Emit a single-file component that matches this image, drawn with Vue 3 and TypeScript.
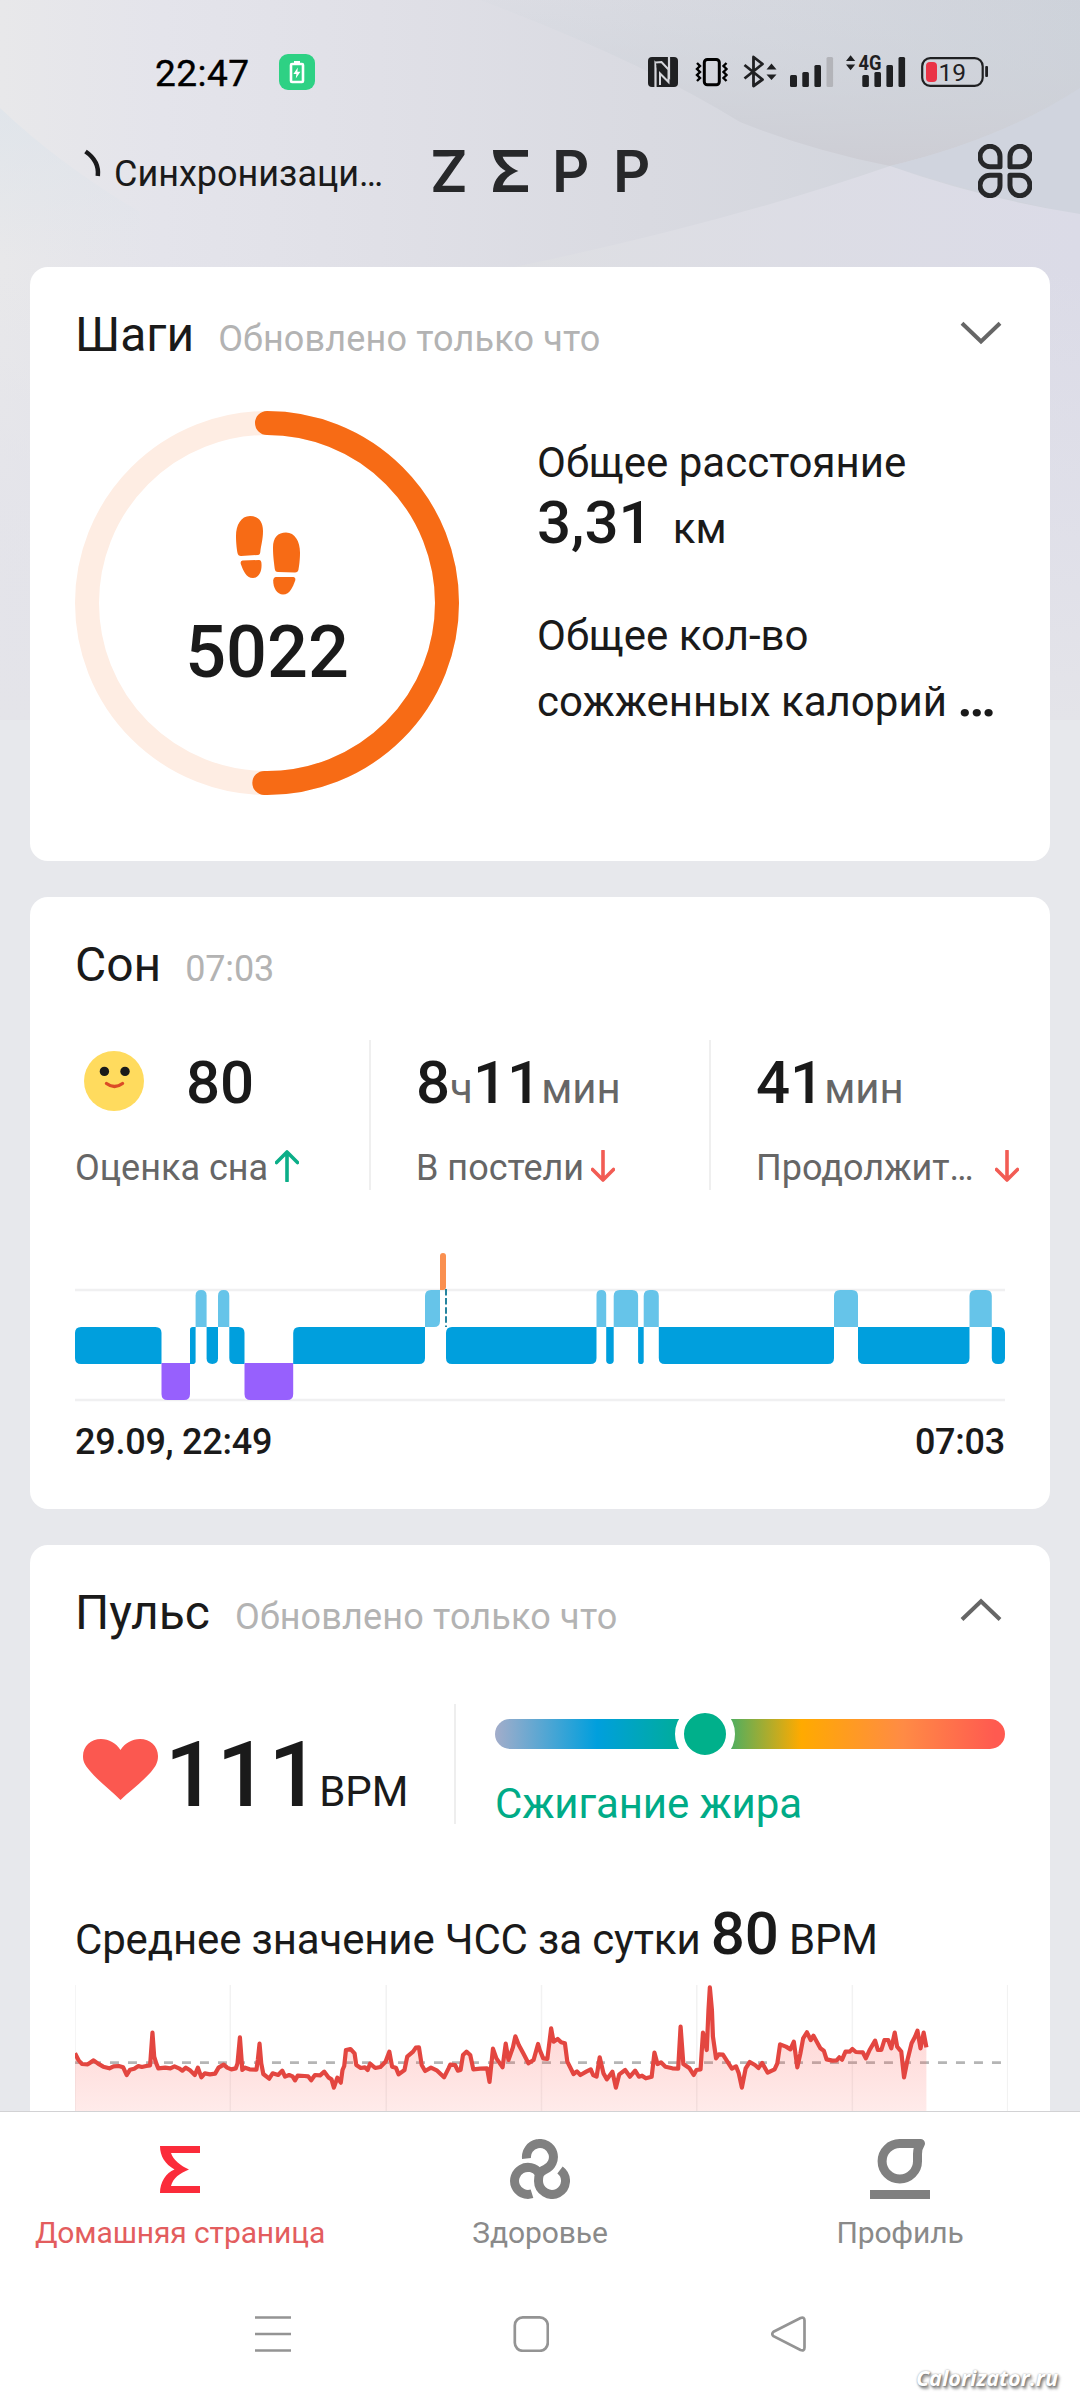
<script setup lang="ts">
type Stage = 'awake' | 'rem' | 'light' | 'deep'

interface Segment {
  stage: Stage
  from: number
  to: number
}

const rowTop: Record<Stage, number> = { awake: 3, rem: 40, light: 77, deep: 113 }
const rowOrder: Stage[] = ['awake', 'rem', 'light', 'deep']

const segments: Segment[] = [
  { stage: 'light', from: 0, to: 86.5 },
  { stage: 'deep', from: 86.5, to: 115 },
  { stage: 'light', from: 115, to: 120.6 },
  { stage: 'rem', from: 120.6, to: 131.6 },
  { stage: 'light', from: 131.6, to: 143 },
  { stage: 'rem', from: 143, to: 154.3 },
  { stage: 'light', from: 154.3, to: 169.5 },
  { stage: 'deep', from: 169.5, to: 218.2 },
  { stage: 'light', from: 218.2, to: 350 },
  { stage: 'rem', from: 350, to: 365 },
  { stage: 'awake', from: 365, to: 371 },
  { stage: 'light', from: 371, to: 521.5 },
  { stage: 'rem', from: 521.5, to: 531.2 },
  { stage: 'light', from: 531.2, to: 538.7 },
  { stage: 'rem', from: 538.7, to: 563.1 },
  { stage: 'light', from: 563.1, to: 568.7 },
  { stage: 'rem', from: 568.7, to: 583.8 },
  { stage: 'light', from: 583.8, to: 759 },
  { stage: 'rem', from: 759, to: 783 },
  { stage: 'light', from: 783, to: 894.5 },
  { stage: 'rem', from: 894.5, to: 916.8 },
  { stage: 'light', from: 916.8, to: 930 },
]

// A corner stays square where the neighbouring stage touches it.
function segmentPath(s: Segment, i: number): string {
  const level = rowOrder.indexOf(s.stage)
  const prev = segments[i - 1] ? rowOrder.indexOf(segments[i - 1].stage) : -9
  const next = segments[i + 1] ? rowOrder.indexOf(segments[i + 1].stage) : -9
  const r = Math.min(6, (s.to - s.from) / 2)
  const tl = prev === level - 1 ? 0 : r
  const tr = next === level - 1 ? 0 : r
  const bl = prev === level + 1 ? 0 : r
  const br = next === level + 1 ? 0 : r
  const y = rowTop[s.stage]
  const b = s.stage === 'deep' ? 150 : y + 37
  return (
    `M${s.from + tl} ${y}H${s.to - tr}Q${s.to} ${y} ${s.to} ${y + tr}V${b - br}` +
    `Q${s.to} ${b} ${s.to - br} ${b}H${s.from + bl}Q${s.from} ${b} ${s.from} ${b - bl}` +
    `V${y + tl}Q${s.from} ${y} ${s.from + tl} ${y}Z`
  )
}

const pulse =
  '218,280 228,300 238,312 255,313 262,308 272,301 285,311 300,320 318,325 330,319 345,318 358,322 368,345 378,329 390,326 402,318 412,321 425,318 436,316 438,290 443,218 448,290 454,310 460,325 480,323 495,325 507,319 520,325 530,332 540,323 552,331 566,345 575,323 585,352 595,340 610,343 625,341 635,323 650,314 660,323 672,328 685,325 690,310 697,232 704,330 712,323 725,328 745,329 749,300 754,251 759,310 765,342 782,356 792,340 808,345 820,332 828,350 840,345 850,349 857,361 865,347 885,348 895,349 904,361 915,345 930,346 942,335 955,353 963,358 970,383 980,353 990,368 995,330 1000,318 1005,270 1018,267 1030,280 1035,315 1048,324 1060,322 1068,330 1075,311 1090,324 1105,321 1120,305 1131,275 1139,320 1150,323 1158,343 1175,330 1183,290 1200,275 1208,263 1217,262 1225,315 1235,333 1252,323 1270,332 1290,352 1303,325 1308,314 1322,315 1330,332 1338,330 1345,285 1355,275 1366,285 1375,328 1395,326 1415,325 1422,366 1432,266 1442,295 1460,322 1469,251 1477,300 1490,262 1497,229 1507,255 1520,280 1535,310 1550,300 1563,252 ' +
  '1568,270 1578,295 1590,297 1601,205 1608,245 1620,237 1630,247 1641,250 1648,305 1666,342 1676,334 1686,345 1703,335 1716,328 1723,345 1733,350 1742,292 1753,340 1763,358 1779,335 1789,383 1799,343 1816,330 1830,350 1845,332 1856,350 1865,347 1876,355 1893,350 1901,278 1910,312 1920,307 1933,320 1953,325 1970,326 1977,200 1985,312 2003,325 2015,345 2023,330 2035,328 2042,218 2053,270 2058,150 2062,82 2068,150 2071,230 2080,295 2088,283 2100,284 2113,305 2126,326 2138,319 2146,340 2155,383 2166,325 2178,306 2193,315 2203,324 2214,309 2230,338 2250,328 2258,310 2266,253 2283,260 2296,268 2306,245 2316,322 2325,280 2333,235 2344,217 2355,240 2363,227 2383,265 2393,272 2401,298 2418,302 2430,301 2438,292 2446,299 2456,275 2468,275 2476,267 2486,276 2506,277 2515,295 2526,270 2542,242 2550,270 2560,270 2569,240 2580,240 2589,265 2599,218 2606,260 2618,275 2626,352 2636,300 2648,250 2658,230 2665,212 2674,265 2683,218 2691,262'

const gridLines = [218, 669, 1122, 1573, 2024, 2476, 2927]
const ringLength = 2 * Math.PI * 180
const ringShare = 5022 / 10000
</script>

<template>
  <div class="screen">
    <svg class="backdrop" viewBox="0 0 1080 720" aria-hidden="true">
      <defs>
        <linearGradient id="base" x1="0" x2="1" y1="0" y2="0">
          <stop offset="0" stop-color="#e8e8ea" />
          <stop offset="0.15" stop-color="#e4e4eb" />
          <stop offset="0.35" stop-color="#e0e0e7" />
          <stop offset="0.6" stop-color="#d9dae1" />
          <stop offset="1" stop-color="#ced2da" />
        </linearGradient>
        <linearGradient id="shade" x1="0" x2="0" y1="0" y2="1">
          <stop offset="0" stop-color="#cfd6dd" stop-opacity="0.1" />
          <stop offset="1" stop-color="#cdcdd4" />
        </linearGradient>
        <linearGradient id="patch" x1="0" x2="0" y1="0" y2="1">
          <stop offset="0" stop-color="#dbe3eb" stop-opacity="0.6" />
          <stop offset="1" stop-color="#dbe3eb" stop-opacity="0" />
        </linearGradient>
        <linearGradient id="floor" x1="0" x2="1" y1="0" y2="0">
          <stop offset="0" stop-color="#dedfe3" />
          <stop offset="1" stop-color="#dbdbe7" />
        </linearGradient>
        <linearGradient id="fade" x1="0" x2="0" y1="0" y2="1">
          <stop offset="0" stop-color="#e3e3ea" stop-opacity="0" />
          <stop offset="0.5" stop-color="#e2e2ea" stop-opacity="0.6" />
          <stop offset="1" stop-color="#e4e4e9" />
        </linearGradient>
      </defs>
      <rect width="1080" height="720" fill="url(#base)" />
      <path d="M0 108Q60 165 140 212V260H0Z" fill="url(#patch)" />
      <path d="M480 0Q640 60 740 122Q810 150 890 166Q1000 140 1080 88V0H480Z" fill="url(#shade)" />
      <path d="M890 166Q1000 140 1080 88V215Q980 195 890 166Z" fill="#d0d4de" />
      <path d="M500 270Q720 225 890 166Q980 198 1080 214V720H500Z" fill="url(#floor)" />
      <rect y="270" width="1080" height="450" fill="url(#fade)" />
    </svg>

    <div class="status">
      <span class="clock">22:47</span>
      <svg class="saver" width="36" height="36" viewBox="0 0 36 36">
        <rect width="36" height="36" rx="9" fill="#2ed184" />
        <rect x="12" y="10" width="12" height="18" rx="1" fill="none" stroke="#fff" stroke-width="2.6" />
        <rect x="15" y="7" width="6" height="3" fill="#fff" />
        <path d="M18.8 13.5L14.4 20H17.4L16.8 24.5L21.4 17.8H18.4Z" fill="#fff" />
      </svg>
      <svg class="indicators" width="344" height="56" viewBox="646 44 344 56">
        <rect x="648" y="57" width="30" height="30" rx="4" fill="#1f2022" />
        <path d="M655.5 87V63L669 77V57" fill="none" stroke="#d5d6db" stroke-width="2.2" />
        <path d="M655.8 62.5L661.5 62L668.5 69.5V82L660 73.5V85" fill="#1f2022" stroke="#d5d6db" stroke-width="2" />
        <rect x="704.3" y="59.4" width="15" height="25.4" rx="3" fill="none" stroke="#000" stroke-width="3" />
        <path d="M697 63l3 3l-3 3l3 3l-3 3l3 3l-3 3M726.5 63l-3 3l3 3l-3 3l3 3l-3 3l3 3" fill="none" stroke="#000" stroke-width="2.4" />
        <path d="M744.5 65L762.5 79.5L753.5 86V57L762.5 64L744.5 78.5" fill="none" stroke="#1f2022" stroke-width="2.8" stroke-linejoin="round" />
        <path d="M766.5 69.5L771.5 63.5L776.5 69.5ZM766.5 74.5L771.5 80L776.5 74.5Z" fill="#1f2022" />
        <g fill="#1f2022">
          <rect x="790" y="75" width="7" height="12" rx="1.5" />
          <rect x="802.3" y="72" width="6.6" height="15" rx="1.5" />
          <rect x="814.4" y="65" width="6.6" height="22" rx="1.5" />
          <rect x="826.5" y="57" width="6.6" height="30" rx="1.5" fill="#b3b4b9" />
          <rect x="862.3" y="75" width="6.6" height="12" rx="1.5" />
          <rect x="874.4" y="72" width="6.6" height="15" rx="1.5" />
          <rect x="886.4" y="65" width="6.6" height="22" rx="1.5" />
          <rect x="898.5" y="57" width="6.6" height="30" rx="1.5" />
          <path d="M846 61L850.6 55.2L855.2 61ZM846 64.5L850.6 70.2L855.2 64.5Z" />
          <text x="858.5" y="70.3" font-size="20.5" font-weight="700" textLength="23" lengthAdjust="spacingAndGlyphs">4G</text>
          <rect x="985.2" y="66" width="2.8" height="11" rx="1" />
          <text x="938.5" y="81.2" font-size="24.5">19</text>
        </g>
        <rect x="922.2" y="58.2" width="60.5" height="27.6" rx="8" fill="none" stroke="#1f2022" stroke-width="2.2" />
        <rect x="926" y="62" width="11" height="20" rx="4" fill="#ea3447" />
      </svg>
    </div>

    <header class="topbar">
      <div class="sync">
        <svg width="38" height="60" viewBox="0 0 38 60">
          <path d="M11.5 10.5Q25.500 20 23.800 35" fill="none" stroke="#1a1a1c" stroke-width="4.500" />
        </svg>
        <span>Синхронизаци…</span>
      </div>
      <div class="logo">
        <span>Z</span>
        <svg width="35" height="42" viewBox="0 0 40 47" preserveAspectRatio="none">
          <path d="M0 0H40V7.6H11C13 14 21 20 29 23.5C20 27 13 32 11 39.4H40V47H0C0 36 6 27 14.5 23.5C5 18 0 10 0 0Z" />
        </svg>
        <span>P</span>
        <span>P</span>
      </div>
      <svg class="apps" width="54" height="54" viewBox="0 0 54 54">
        <g fill="none" stroke="#27282a" stroke-width="5">
          <path d="M22 22.7H12.4A10 10.2 0 1 1 22 12.6Z" stroke-linejoin="round" />
          <path d="M32 22.7H41.6A10 10.2 0 1 0 32 12.6Z" stroke-linejoin="round" />
          <path d="M22 31.3H12.4A10 10.2 0 1 0 22 41.4Z" stroke-linejoin="round" />
          <path d="M32 31.3H41.6A10 10.2 0 1 1 32 41.4Z" stroke-linejoin="round" />
        </g>
      </svg>
    </header>

    <main class="cards">
      <section class="card steps">
        <div class="card-head">
          <h2>Шаги</h2>
          <span class="note">Обновлено только что</span>
          <svg class="chevron" width="44" height="26" viewBox="0 0 44 26">
            <path d="M3 3.2L22 21.5L41 3.2" />
          </svg>
        </div>
        <div class="steps-body">
          <div class="ring">
            <svg class="ring-art" viewBox="0 0 384 384">
              <circle cx="192" cy="192" r="180" fill="none" stroke="#feede3" stroke-width="24" />
              <circle
                cx="192" cy="192" r="180" fill="none" stroke="#f76b15" stroke-width="24"
                stroke-linecap="round" transform="rotate(-90 192 192)"
                :stroke-dasharray="`${ringLength * ringShare} ${ringLength}`"
              />
            </svg>
            <svg class="feet" width="64" height="79" viewBox="0 0 64 79">
              <path d="M14 0C5 0 0 9 0 20C0 28 1 34 1.500 37Q2 40 5 40L22 39Q24 39 24.300 36C25 29 27 24 27 15C27 5 22 0 14 0Z" />
              <path d="M6.500 44.500L23 44Q25.500 44 25.500 48C26 55 23 62 17 62C10 62 7 54 4.800 48Q4 45 6.500 44.500Z" />
              <g transform="translate(64 16.500) scale(-1 1)">
                <path d="M14 0C5 0 0 9 0 20C0 28 1 34 1.500 37Q2 40 5 40L22 39.500Q25 39.500 25.300 36C26 29 27 24 27 15C27 5 22 0 14 0Z" />
                <path d="M6.500 44.500L24 44.500Q26.500 44.500 26.800 48C27 55 23 62 17 62C10 62 7 54 4.800 48Q4 45 6.500 44.500Z" />
              </g>
            </svg>
            <strong>5022</strong>
          </div>
          <div class="steps-info">
            <p>Общее расстояние</p>
            <p class="distance"><b>3,31</b><span>км</span></p>
            <p class="burned">Общее кол-во<br />сожженных калорий <b>…</b></p>
          </div>
        </div>
      </section>

      <section class="card sleep">
        <div class="card-head">
          <h2>Сон</h2>
          <span class="note">07:03</span>
        </div>
        <div class="metrics">
          <div class="metric">
            <div class="value">
              <svg class="smile" width="60" height="60" viewBox="0 0 60 60">
                <circle cx="30" cy="30" r="30" fill="#ffdb5e" />
                <circle cx="20.400" cy="20.400" r="4.700" fill="#1a1a1a" />
                <circle cx="41" cy="20.400" r="4.700" fill="#1a1a1a" />
                <path d="M22.500 32.500Q30.500 38.500 38.500 32.500" fill="none" stroke="#db4b26" stroke-width="3.400" stroke-linecap="round" />
              </svg>
              <b>80</b>
            </div>
            <div class="label">
              <span>Оценка сна</span>
              <svg class="arrow up" width="24" height="32" viewBox="0 0 24 32"><path d="M12 31V2M1.500 12.500L12 2L22.500 12.500" /></svg>
            </div>
          </div>
          <div class="metric">
            <div class="value"><b>8</b><i>ч</i><b>11</b><i>мин</i></div>
            <div class="label">
              <span>В постели</span>
              <svg class="arrow" width="24" height="32" viewBox="0 0 24 32"><path d="M12 1V30M1.500 19.500L12 30L22.500 19.500" /></svg>
            </div>
          </div>
          <div class="metric">
            <div class="value"><b>41</b><i>мин</i></div>
            <div class="label spread">
              <span>Продолжит…</span>
              <svg class="arrow" width="24" height="32" viewBox="0 0 24 32"><path d="M12 1V30M1.500 19.500L12 30L22.500 19.500" /></svg>
            </div>
          </div>
        </div>
        <svg class="hypnogram" width="930" height="153" viewBox="0 0 930 153">
          <path d="M0 40H930M0 150H930" stroke="#f0f0f1" stroke-width="2.400" />
          <path v-for="(s, i) in segments" :key="i" :class="s.stage" :d="segmentPath(s, i)" />
          <path d="M371 39V77" stroke="#25849f" stroke-width="2" stroke-dasharray="6.500 2.600" />
        </svg>
        <div class="range"><span>29.09, 22:49</span><span>07:03</span></div>
      </section>

      <section class="card heart">
        <div class="card-head">
          <h2>Пульс</h2>
          <span class="note">Обновлено только что</span>
          <svg class="chevron" width="44" height="26" viewBox="0 0 44 26">
            <path d="M3 21.500L22 3.200L41 21.500" />
          </svg>
        </div>
        <div class="pulse-row">
          <div class="pulse-now">
            <svg width="75" height="61" viewBox="0 0 75 61">
              <path d="M37.500 61C28 51 15 42 7 32C1 25 0 22 0 17C0 7 8 0 18 0C26 0 33 4 37.500 11C42 4 49 0 57 0C67 0 75 7 75 17C75 23 73 27 68 33C59 43 47 52 37.500 61Z" fill="#fb5850" />
            </svg>
            <b>111</b><span>BPM</span>
          </div>
          <div class="zone">
            <div class="scale"><i></i></div>
            <span>Сжигание жира</span>
          </div>
        </div>
        <p class="average">Среднее значение ЧСС за сутки <b>80</b> BPM</p>
        <svg class="pulse-chart" width="933" height="126" viewBox="218 75 2710 378" preserveAspectRatio="none">
          <defs>
            <linearGradient id="area" gradientUnits="userSpaceOnUse" x1="0" y1="75" x2="0" y2="453">
              <stop offset="0" stop-color="#ff5a55" stop-opacity="0.3" />
              <stop offset="1" stop-color="#fb5850" stop-opacity="0.12" />
            </linearGradient>
          </defs>
          <line v-for="x in gridLines" :key="x" class="grid" :x1="x" :x2="x" y1="75" y2="453" />
          <line class="mean" x1="215" x2="2928" y1="308" y2="308" />
          <polygon :points="`218,453 ${pulse} 2691,453`" fill="url(#area)" />
          <polyline class="trace" :points="pulse" />
        </svg>
      </section>
    </main>

    <nav class="tabs">
      <a class="tab active">
        <span class="tab-icon">
          <svg width="40" height="47" viewBox="0 0 40 47">
            <path d="M0 0H40V7H11C13 14 21 20 29 23.500C20 27 13 32 11 40H40V47H0C0 36 6 27 14.500 23.500C5 18 0 10 0 0Z" fill="#fb2b3a" />
          </svg>
        </span>
        Домашняя страница
      </a>
      <a class="tab">
        <span class="tab-icon">
          <svg width="60" height="60" viewBox="0 0 60 60" fill="none" stroke="#808080" stroke-width="9">
            <path d="M16.500 19.500A13.500 13.500 0 1 1 35 30.500C29 33 28.500 37 28.500 42A13.500 13.500 0 1 0 50 31" />
            <path d="M22 54.800A13.500 13.500 0 1 1 29 34" />
          </svg>
        </span>
        Здоровье
      </a>
      <a class="tab">
        <span class="tab-icon">
          <svg width="60" height="60" viewBox="0 0 60 60">
            <path d="M30 4.500H50.500Q47.500 9 47.500 15V22A17.700 17.700 0 1 1 30 4.500Z" fill="none" stroke="#808080" stroke-width="9" stroke-linejoin="round" />
            <rect y="51" width="60" height="9" fill="#808080" />
          </svg>
        </span>
        Профиль
      </a>
    </nav>

    <div class="system">
      <svg width="36" height="36" viewBox="0 0 36 36"><path d="M0 1.500H36M0 18H36M0 34.500H36" /></svg>
      <svg width="36" height="36" viewBox="0 0 36 36"><rect x="1.800" y="1.400" width="33" height="33.400" rx="8" /></svg>
      <svg width="36" height="36" viewBox="0 0 36 36"><path d="M2.500 15.800L29.500 2Q33.500 .6 33.500 4.600V31.400Q33.500 35.400 29.500 34L2.500 20.200Q0 18 2.500 15.800Z" /></svg>
    </div>
    <div class="watermark">Calorizator.ru</div>
  </div>
</template>

<style>
body {
  margin: 0;
  background: #e7e8ec;
}
</style>

<style scoped>
.screen {
  position: relative;
  display: flex;
  flex-direction: column;
  width: 1080px;
  height: 2400px;
  overflow: hidden;
  background: #e7e8ec;
  color: #1a1a1a;
  font-family: Roboto, "Noto Sans", sans-serif;
}
.screen svg {
  display: block;
  flex: none;
}
.backdrop {
  position: absolute;
  top: 0;
  left: 0;
  width: 1080px;
  height: 720px;
}
.status {
  position: relative;
  box-sizing: border-box;
  display: flex;
  align-items: center;
  height: 110px;
  padding: 34px 90px 0 155px;
}
.clock {
  width: 124px;
  margin-top: 2px;
  font-size: 37px;
  letter-spacing: 0.5px;
  color: #000;
  -webkit-text-stroke: 0.4px #000;
}
.indicators {
  margin-left: auto;
}
.topbar {
  position: relative;
  display: grid;
  grid-template-columns: 1fr auto 1fr;
  align-items: center;
  height: 122px;
  padding: 0 48px 0 74px;
}
.sync {
  display: flex;
  align-items: center;
  gap: 2px;
  font-size: 36px;
  white-space: nowrap;
}
.sync span {
  margin-top: 5px;
}
.logo {
  display: flex;
  align-items: center;
  gap: 26px;
  margin-right: 28px;
  color: #27282a;
  font: 600 58px/60px Inter, Roboto, sans-serif;
}
.logo span {
  width: 35px;
}
.logo svg {
  margin: 0 -2px 0 2px;
}
.logo path {
  fill: #27282a;
}
.apps {
  justify-self: end;
}
.cards {
  position: relative;
  box-sizing: border-box;
  display: flex;
  flex-direction: column;
  gap: 36px;
  height: 1879px;
  padding: 35px 30px 0;
  overflow: hidden;
}
.card {
  box-sizing: border-box;
  flex: none;
  padding: 38px 45px 0;
  border-radius: 18px;
  background: #fff;
}
.steps {
  height: 594px;
}
.sleep {
  height: 612px;
}
.heart {
  height: 700px;
}
.card-head {
  display: flex;
  align-items: baseline;
  height: 60px;
  line-height: 60px;
}
h2 {
  margin: 0;
  font-size: 48px;
  font-weight: 400;
}
.note {
  margin-left: 24px;
  font-size: 36px;
  letter-spacing: 0.18px;
  color: #b3b3b3;
}
.sleep .note {
  letter-spacing: -0.2px;
}
.heart .note {
  margin-left: 25px;
}
.chevron {
  align-self: center;
  margin: -4px 2px 0 auto;
}
.chevron path {
  fill: none;
  stroke: #666;
  stroke-width: 4;
}
.steps-body {
  display: flex;
  gap: 78px;
  margin-top: 46px;
}
.ring {
  position: relative;
  display: flex;
  flex-direction: column;
  align-items: center;
  width: 384px;
  height: 384px;
}
.ring-art {
  position: absolute;
  inset: 0;
}
.feet {
  margin: 105px 0 0 2px;
  fill: #f76b15;
}
.ring strong {
  margin-top: 16px;
  font-size: 72px;
  font-weight: 500;
  line-height: 84px;
}
.steps-info {
  padding-top: 19px;
  font-size: 42px;
  line-height: 66px;
  white-space: nowrap;
}
p {
  margin: 0;
}
b {
  font-weight: 500;
}
.distance {
  display: flex;
  align-items: baseline;
  gap: 20px;
  height: 66px;
  margin: -6px 0 0;
}
.distance b {
  font-size: 60px;
}
.burned {
  margin-top: 47px;
}
.burned b {
  font-size: 52px;
  font-weight: 700;
  line-height: 0;
}
.metrics {
  display: flex;
  height: 150px;
  margin-top: 45px;
}
.metric {
  box-sizing: border-box;
  flex: none;
  width: 340px;
  padding: 13px 0 0 45px;
  border-left: 2px solid #efefef;
}
.metric:first-child {
  width: 294px;
  padding-left: 0;
  border-left: 0;
}
.metric:last-child {
  width: 296px;
}
.value {
  display: flex;
  align-items: baseline;
  height: 60px;
  line-height: 60px;
  white-space: nowrap;
}
.value b {
  font-size: 60px;
}
.value i {
  font-size: 42px;
  font-style: normal;
  color: #666;
}
.smile {
  align-self: center;
  margin: -4px 42px 0 9px;
}
.label {
  display: flex;
  align-items: center;
  height: 44px;
  margin-top: 33px;
  font-size: 36px;
  line-height: 44px;
  color: #666;
  white-space: nowrap;
}
.arrow {
  margin: -4px 0 0 7px;
}
.spread .arrow {
  margin-left: 21px;
}
.arrow path {
  fill: none;
  stroke: #f25c54;
  stroke-width: 3.6;
  stroke-linecap: round;
  stroke-linejoin: round;
}
.arrow.up path {
  stroke: #0bae88;
}
.hypnogram {
  margin-top: 60px;
}
.awake {
  fill: #fa9050;
}
.rem {
  fill: #66c4e9;
}
.light {
  fill: #009fdd;
}
.deep {
  fill: #9760fd;
}
.range {
  display: flex;
  justify-content: space-between;
  margin-top: 17px;
  font-size: 36px;
  font-weight: 500;
  letter-spacing: -0.25px;
  line-height: 44px;
}
.pulse-row {
  display: flex;
  height: 120px;
  margin-top: 61px;
}
.pulse-now {
  box-sizing: border-box;
  display: flex;
  align-items: baseline;
  width: 381px;
  height: 120px;
  padding-left: 8px;
  border-right: 2px solid #eee;
  font-size: 42px;
  line-height: 100px;
  white-space: nowrap;
}
.pulse-now svg {
  align-self: flex-start;
  margin: 35px 7px 0 0;
}
.pulse-now b {
  margin: 21px 0 0;
  font-size: 91px;
}
.pulse-now span {
  margin-left: -1px;
}
.zone {
  flex: 1;
  padding: 15px 0 0 39px;
  font-size: 42px;
  letter-spacing: -0.1px;
  line-height: 60px;
  color: #00ab87;
}
.zone span {
  display: block;
  margin-top: 25px;
}
.scale {
  position: relative;
  height: 30px;
  border-radius: 15px;
  background: linear-gradient(90deg, #a3adca 0, #009fdd 20%, #00b08b 40%, #ffaa00 60%, #ff8b45 80%, #ff5a50 98%);
}
.scale i {
  position: absolute;
  top: -15px;
  left: 180px;
  width: 42px;
  height: 42px;
  border: 9px solid #fff;
  border-radius: 50%;
  background: #00b08b;
}
.average {
  height: 60px;
  margin-top: 80px;
  font-size: 42px;
  letter-spacing: -0.15px;
  line-height: 60px;
  white-space: nowrap;
}
.average b {
  font-size: 60px;
}
.pulse-chart {
  margin-top: 21px;
}
.pulse-chart line,
.trace {
  fill: none;
  vector-effect: non-scaling-stroke;
}
.grid {
  stroke: #f2f2f2;
  stroke-width: 1.5;
}
.mean {
  stroke: #b5b5b5;
  stroke-width: 2.6;
  stroke-dasharray: 9 9;
}
.trace {
  stroke: #e34640;
  stroke-width: 4.2;
  stroke-linejoin: round;
}
.tabs {
  position: relative;
  box-sizing: border-box;
  display: flex;
  height: 157px;
  padding-top: 27px;
  border-top: 1px solid #d2d2d4;
  background: #fff;
}
.tab {
  display: flex;
  flex: 1;
  flex-direction: column;
  align-items: center;
  gap: 16px;
  font-size: 30px;
  letter-spacing: -0.12px;
  line-height: 36px;
  color: #8a8a8a;
}
.tab.active {
  color: #e35d5e;
}
.tab-icon {
  display: flex;
  align-items: center;
  height: 60px;
}
.system {
  position: relative;
  display: flex;
  flex: 1;
  align-items: center;
  gap: 222px;
  padding-left: 255px;
  background: #fff;
}
.system path,
.system rect {
  fill: none;
  stroke: #949494;
  stroke-width: 2.7;
}
.watermark {
  position: absolute;
  right: 22px;
  bottom: 8px;
  font: italic 700 21.6px/28px "Open Sans", sans-serif;
  color: #fff;
  text-shadow: 1px 1px 2px #777, 2px 3px 3px #999, 0 0 2px #aaa;
}
</style>
